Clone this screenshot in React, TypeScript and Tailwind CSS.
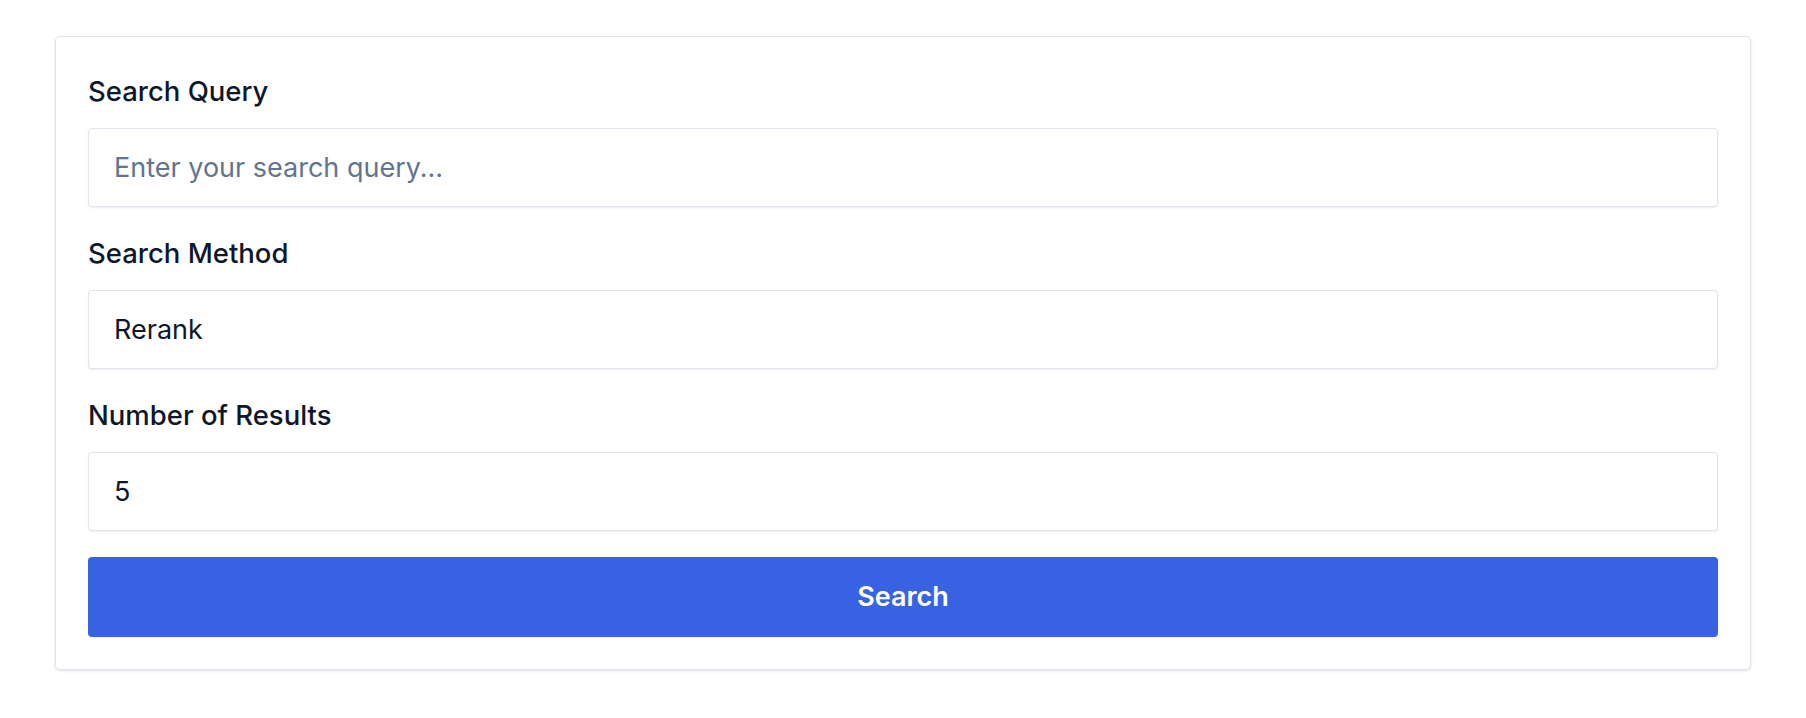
const fields = [
  { label: 'Search Query', value: '', placeholder: 'Enter your search query...' },
  { label: 'Search Method', value: 'Rerank', placeholder: '' },
  { label: 'Number of Results', value: '5', placeholder: '' },
]

export default function App() {
  return (
    <div className="min-h-screen bg-white px-[55px] pt-[36px] font-['Inter',sans-serif]">
      <div className="rounded-[5px] border border-[#dfe4ee] bg-white px-[32px] pt-[34px] pb-[32px] shadow-[0_1px_3px_rgba(15,23,42,0.12)]">
        <div className="flex flex-col gap-[26px]">
          {fields.map((f) => (
            <div key={f.label} className="flex flex-col">
              <label className="mb-[16px] text-[27.5px] leading-[41px] font-medium text-slate-900">{f.label}</label>
              <input
                readOnly
                defaultValue={f.value}
                placeholder={f.placeholder}
                className="h-[79px] w-full rounded-[4px] border border-[#dfe4ee] bg-white px-[25px] text-[27px] text-slate-900 shadow-[0_1px_2px_rgba(15,23,42,0.08)] outline-none placeholder:text-slate-500"
              />
            </div>
          ))}
          <button className="h-[80px] w-full rounded-[4px] bg-[#3763e3] text-[27px] font-semibold text-white">
            Search
          </button>
        </div>
      </div>
    </div>
  )
}
